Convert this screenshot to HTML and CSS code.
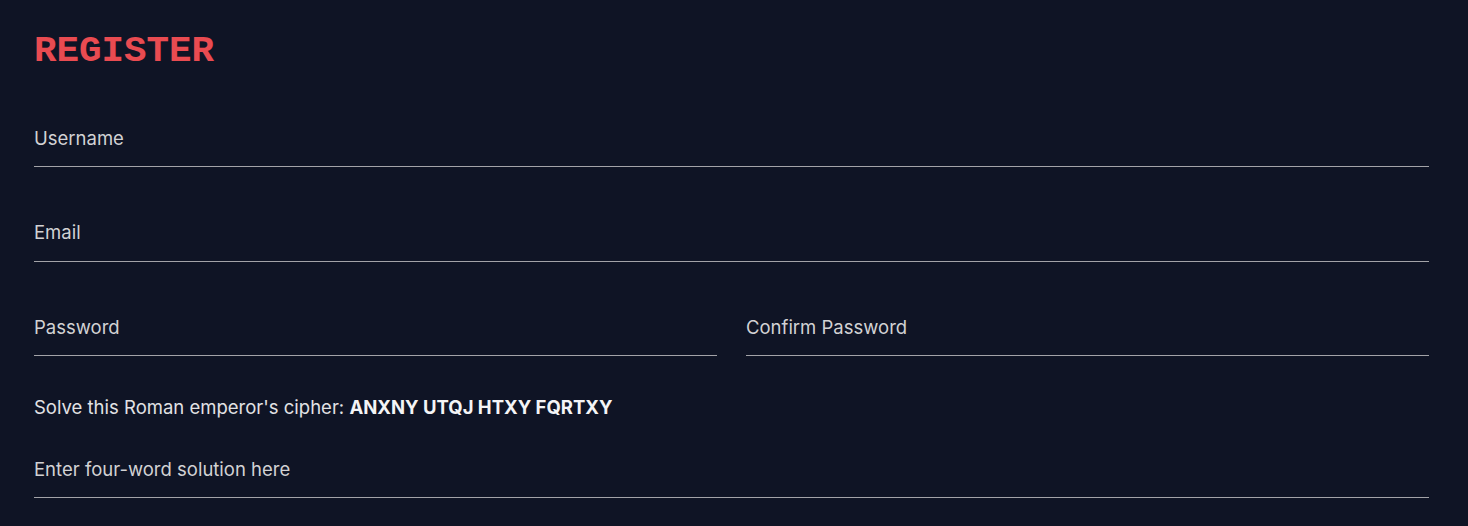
FILE: index.html
```html
<!DOCTYPE html>
<html lang="en">
<head>
<meta charset="utf-8">
<title>Register</title>
<link rel="stylesheet" href="styles.css">
</head>
<body>
<main class="page">
  <h1 class="title">REGISTER</h1>
  <form class="form">
    <input class="field" type="text" placeholder="Username">
    <input class="field" type="email" placeholder="Email">
    <div class="row">
      <input class="field" type="password" placeholder="Password">
      <input class="field" type="password" placeholder="Confirm Password">
    </div>
    <p class="cipher">Solve this Roman emperor's cipher: <strong>ANXNY UTQJ HTXY FQRTXY</strong></p>
    <input class="field field-solution" type="text" placeholder="Enter four-word solution here">
  </form>
</main>
</body>
</html>
```
FILE: styles.css
```css
* { box-sizing: border-box; }
html, body {
  margin: 0;
  background: #0f1425;
}
body {
  font-family: Inter, "Noto Sans", sans-serif;
  color: #d6d6d6;
}
.page {
  padding: 27px 39px 0 34px;
}
.title {
  margin: 0;
  font-family: "Liberation Mono", "DejaVu Sans Mono", monospace;
  font-weight: 700;
  font-size: 37.5px;
  line-height: 48px;
  color: #e94b51;
  letter-spacing: 0;
}
.form {
  display: flex;
  flex-direction: column;
  gap: 37.5px;
  margin-top: 35px;
}
.field {
  display: block;
  width: 100%;
  height: 57px;
  padding: 16.5px 0 17.5px;
  margin: 0;
  border: 0;
  border-bottom: 1px solid #a3a3a8;
  background: transparent;
  font-family: Inter, "Noto Sans", sans-serif;
  font-size: 18.5px;
  line-height: 22px;
  color: #e0e0e0;
  outline: none;
}
.field::placeholder {
  color: #d2d2d4;
  opacity: 1;
}
.row {
  display: grid;
  grid-template-columns: 1fr 1fr;
  gap: 29px;
}
.cipher {
  margin: 2px 0 -14px;
  font-size: 18.5px;
  line-height: 22px;
  color: #e2e2e4;
}
.cipher strong {
  font-weight: 700;
  color: #f4f4f6;
}
```
